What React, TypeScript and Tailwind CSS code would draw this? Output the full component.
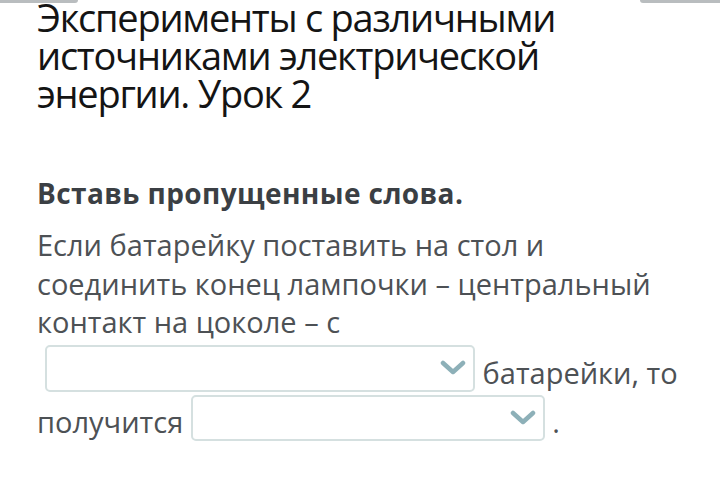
function Chevron() {
  return (
    <svg width="26" height="16" viewBox="0 0 26 16" fill="none">
      <path d="M3 3 L13 12 L23 3" stroke="#8db0b8" strokeWidth="4.5" strokeLinecap="round" strokeLinejoin="round" />
    </svg>
  );
}

function Select({ className }: { className: string }) {
  return (
    <span
      className={`inline-flex items-center justify-end rounded-[5px] border-2 border-[#d5e0e0] bg-white pr-[7px] align-[7px] ${className}`}
    >
      <Chevron />
    </span>
  );
}

export default function App() {
  return (
    <div className="relative h-[495px] w-[720px] overflow-hidden bg-white font-['Open_Sans',sans-serif]">
      <div className="absolute left-0 top-0 h-[3px] w-[78px] rounded-br bg-[#b9bdbf]" />
      <div className="absolute right-0 top-0 h-[3px] w-[80px] rounded-bl bg-[#b9bdbf]" />

      <div className="px-[37px]">
        <h1 className="mt-[-2px] text-[38px] font-normal leading-[38px] tracking-[-1.25px] text-[#141414]">
          Эксперименты с различными источниками электрической энергии. Урок 2
        </h1>

        <h2 className="mt-[62px] text-[28px] font-bold leading-[38px] tracking-[0.4px] text-[#3b3f44]">
          Вставь пропущенные слова.
        </h2>

        <p className="mt-[14px] text-[29px] leading-[38.5px] tracking-[0px] text-[#4d5155]">
          Если батарейку поставить на стол и соединить конец лампочки – центральный контакт на
          цоколе – с <Select className="my-[3px] ml-[8px] h-[47px] w-[430px]" /> батарейки, то
          получится <Select className="h-[46px] w-[354px]" /> .
        </p>
      </div>
    </div>
  );
}
